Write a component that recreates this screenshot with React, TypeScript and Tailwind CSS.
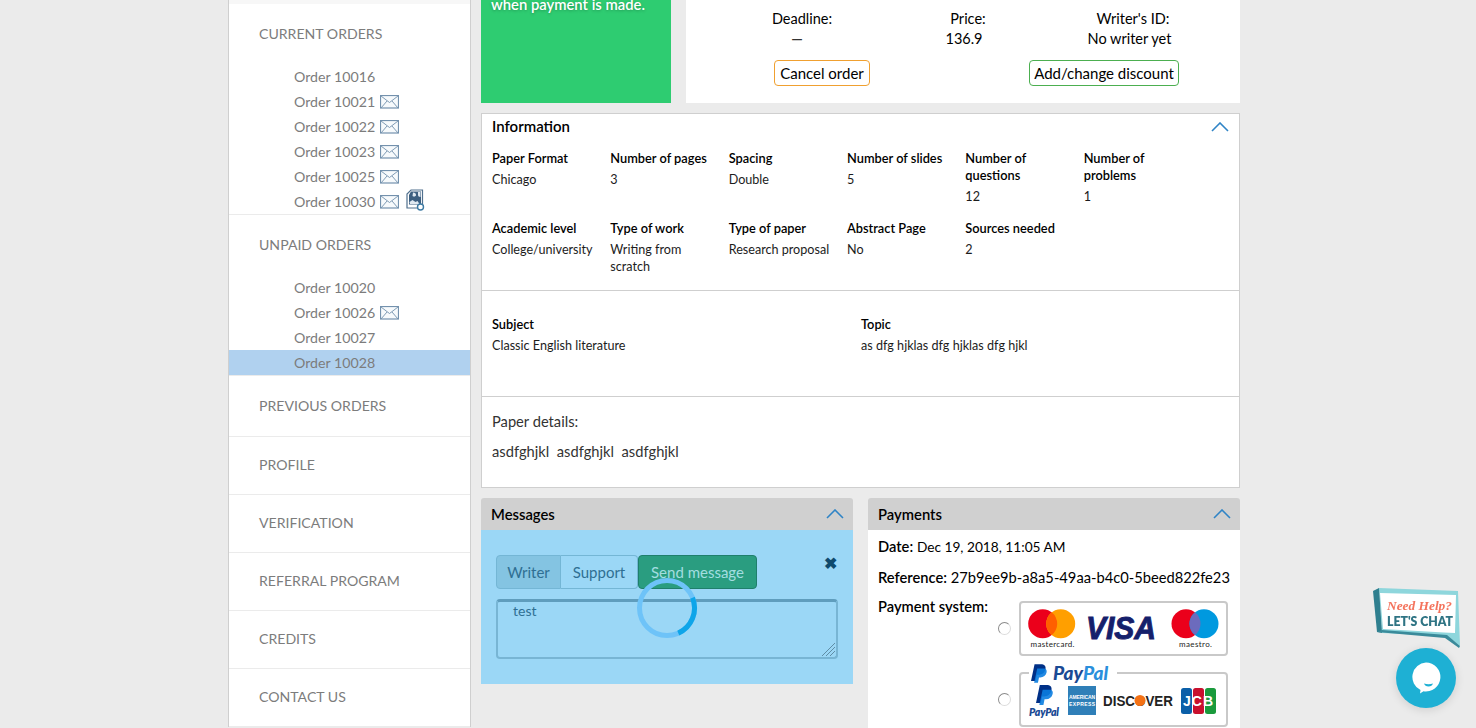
const currentOrders = [
  { id: 10016 },
  { id: 10021, mail: true },
  { id: 10022, mail: true },
  { id: 10023, mail: true },
  { id: 10025, mail: true },
  { id: 10030, mail: true, file: true },
]

const unpaidOrders = [
  { id: 10020 },
  { id: 10026, mail: true },
  { id: 10027 },
  { id: 10028, active: true },
]

const otherLinks = [
  { label: 'PREVIOUS ORDERS', cls: 'h-[61px]' },
  { label: 'PROFILE', cls: 'h-[58px]' },
  { label: 'VERIFICATION', cls: 'h-[58px]' },
  { label: 'REFERRAL PROGRAM', cls: 'h-[58px]' },
  { label: 'CREDITS', cls: 'h-[58px]' },
  { label: 'CONTACT US', cls: 'h-[58px]' },
]

const infoRowOne = [
  { label: 'Paper Format', value: 'Chicago' },
  { label: 'Number of pages', value: '3' },
  { label: 'Spacing', value: 'Double' },
  { label: 'Number of slides', value: '5' },
  { label: 'Number of questions', value: '12' },
  { label: 'Number of problems', value: '1' },
]

const infoRowTwo = [
  { label: 'Academic level', value: 'College/university' },
  { label: 'Type of work', value: 'Writing from scratch' },
  { label: 'Type of paper', value: 'Research proposal' },
  { label: 'Abstract Page', value: 'No' },
  { label: 'Sources needed', value: '2' },
]

function Chevron() {
  return (
    <svg width="18" height="10" viewBox="0 0 18 10" fill="none" stroke="#2f84c6" strokeWidth="1.6">
      <path d="M1 9l8-8 8 8" />
    </svg>
  )
}

function MailIcon() {
  return (
    <svg width="19" height="14" viewBox="0 0 19 14" fill="none" stroke="#7391ad" className="shrink-0">
      <rect x="0.5" y="0.5" width="18" height="12.5" fill="#f7fafc" strokeWidth="1.2" />
      <path d="M1 1l8.5 6.5L18 1M1 13l6-7M18 13l-6-7" strokeWidth="0.9" />
    </svg>
  )
}

function FileIcon() {
  return (
    <svg width="19" height="22" viewBox="0 0 19 22" fill="none" className="shrink-0">
      <path d="M5 1h11.5v18H1V5z" stroke="#50708e" strokeWidth="1.2" fill="#fff" />
      <path d="M5 2.5h10v13H3V6z" fill="#3d5f80" />
      <path d="M7 3.5c2 0 3 1 3 2.5s-2 2-3.5 1zM12 3h2.5v5c-1.5 0-2.5-1-2.5-2zM3.5 13l3-2 3 2 2-1 2 3H4z" fill="#dfe8f0" />
      <circle cx="14.5" cy="18" r="3" fill="#fff" stroke="#3d7aa3" strokeWidth="1.4" />
    </svg>
  )
}

function OrderRow({ order }: { order: { id: number; mail?: boolean; file?: boolean; active?: boolean } }) {
  return (
    <div className={`flex h-[25px] items-center gap-[5px] pl-[65px] text-[14.2px] text-[#7c7c7c] ${order.active ? 'bg-[#b0d1ef]' : ''}`}>
      <span>Order {order.id}</span>
      {order.mail && <MailIcon />}
      {order.file && <span className="-mt-[3px] ml-[2px]"><FileIcon /></span>}
    </div>
  )
}

function Sidebar() {
  return (
    <aside className="h-[727px] w-[243px] shrink-0 border-x border-b border-[#cfcfcf] bg-white text-[#7c7c7c] font-['Lato',sans-serif]">
      <div className="h-[4px] bg-[#f7f7f7]" />
      <div className="border-b border-[#ebebeb]">
        <div className="flex h-[60px] items-center pb-[1px] pl-[30px] text-[14.1px]">CURRENT ORDERS</div>
        <div className="h-[150px]">
          {currentOrders.map((o) => <OrderRow key={o.id} order={o} />)}
        </div>
      </div>
      <div className="border-b border-[#ebebeb]">
        <div className="flex h-[60px] items-center pb-[1px] pl-[30px] text-[14.1px]">UNPAID ORDERS</div>
        {unpaidOrders.map((o) => <OrderRow key={o.id} order={o} />)}
      </div>
      {otherLinks.map((l) => (
        <div key={l.label} className={`flex items-center border-b border-[#ebebeb] pb-[1px] pl-[30px] text-[14.1px] ${l.cls}`}>
          {l.label}
        </div>
      ))}
    </aside>
  )
}

function OrderSummary() {
  return (
    <div className="flex h-[103px] gap-[15px]">
      <div className="h-full w-[190px] shrink-0 overflow-hidden bg-[#2ecc71] px-[10px] text-[14.8px] font-semibold text-white [text-shadow:0_1px_3px_rgba(0,0,0,0.25)]">
        <p className="-mt-[6px] leading-[20px]">when payment is made.</p>
      </div>
      <div className="flex-1 bg-white text-[14.5px] leading-[20px] text-black">
        <div className="mt-[9px] grid grid-cols-[232px_96px_226px] text-center">
          <div>
            <div>Deadline:</div>
            <div className="pr-[10px] font-bold text-[#333]">&mdash;</div>
          </div>
          <div>
            <div className="pl-[4px]">Price:</div>
            <div className="pr-[4px]">136.9</div>
          </div>
          <div>
            <div className="whitespace-nowrap pl-[12px]">Writer's ID:</div>
            <div className="whitespace-nowrap pl-[5px]">No writer yet</div>
          </div>
        </div>
        <div className="mt-[11px] flex">
          <button className="ml-[88px] h-[26px] w-[96px] rounded-[4px] border border-[#f0a030] bg-white text-[15px]">Cancel order</button>
          <button className="ml-[159px] h-[26px] w-[150px] whitespace-nowrap rounded-[4px] border border-[#4caf50] bg-white text-[15px]">Add/change discount</button>
        </div>
      </div>
    </div>
  )
}

function InfoCell({ label, value }: { label: string; value: string }) {
  return (
    <div className="pr-[14px] text-[12.6px] leading-[17px]">
      <div className="text-[12.8px] font-semibold text-black">{label}</div>
      <div className="mt-[4px] text-[#1c1c1c]">{value}</div>
    </div>
  )
}

function Information() {
  return (
    <section className="mt-[10px] h-[375px] border border-[#cfcfcf] bg-white font-['Lato',sans-serif]">
      <div className="flex h-[26px] items-center justify-between px-[10px]">
        <span className="-mt-[1px] text-[15px] font-semibold text-black">Information</span>
        <Chevron />
      </div>
      <div className="h-[151px] border-b border-[#cfcfcf] px-[10px] pt-[10px]">
        <div className="grid h-[70px] w-[710px] grid-cols-6">
          {infoRowOne.map((c) => <InfoCell key={c.label} {...c} />)}
        </div>
        <div className="grid w-[710px] grid-cols-6">
          {infoRowTwo.map((c) => <InfoCell key={c.label} {...c} />)}
        </div>
      </div>
      <div className="grid h-[106px] grid-cols-[369px_1fr] border-b border-[#cfcfcf] px-[10px] pt-[25px]">
        <InfoCell label="Subject" value="Classic English literature" />
        <InfoCell label="Topic" value="as dfg hjklas dfg hjklas dfg hjkl" />
      </div>
      <div className="px-[10px] pt-[14px] text-[14.7px] leading-[20px] text-[#333]">
        <p>Paper details:</p>
        <p className="mt-[10px] whitespace-pre">asdfghjkl  asdfghjkl  asdfghjkl</p>
      </div>
    </section>
  )
}

function PanelHeader({ title }: { title: string }) {
  return (
    <div className="flex h-[32px] items-center justify-between rounded-t-[3px] bg-[#d0d0d0] pl-[10px] pr-[9px] text-[14.8px]">
      <span className="font-semibold text-black">{title}</span>
      <Chevron />
    </div>
  )
}

function Messages() {
  return (
    <section className="relative h-[186px] w-[372px] shrink-0 font-['Lato',sans-serif]">
      <PanelHeader title="Messages" />
      <div className="h-[154px] bg-[#9bd7f6] px-[15px] pt-[25px]">
        <div className="flex items-start justify-between">
          <div className="flex h-[34px] text-[15px] text-[#2f6f93]">
            <div className="flex w-[65px] items-center justify-center rounded-l-[4px] border border-[#74b6d5] bg-[#84c4e2]">Writer</div>
            <div className="flex w-[77px] items-center justify-center rounded-r-[4px] border border-l-0 border-[#74b6d5]">Support</div>
            <div className="flex w-[119px] items-center justify-center rounded-[4px] border border-[#1f7f6c] bg-[#2a9d80] text-[#a3dde0]">Send message</div>
          </div>
          <span className="mr-[1px] text-[16px] font-black leading-[16px] text-[#0f4a6d]">&#10006;</span>
        </div>
        <div className="relative mt-[10px] h-[60px] rounded-[4px] border-2 border-t-[3px] border-[#78b5d4] border-t-[#5f9dbd] pl-[15px] text-[14px] leading-[18px] text-[#2f6f93]">
          test
          <svg width="14" height="14" viewBox="0 0 14 14" stroke="#5f8da6" className="absolute bottom-[1px] right-[1px]">
            <path d="M1 14L14 1M5 14l9-9M9 14l5-5" strokeWidth="1" />
          </svg>
        </div>
      </div>
      {/* loading spinner lies over the form */}
      <svg width="62" height="62" viewBox="0 0 62 62" fill="none" className="absolute left-[155px] top-[79px]">
        <circle cx="31" cy="31" r="27.5" stroke="#6ec3f8" strokeWidth="5" />
        <path d="M56.5 20.7A27.5 27.5 0 0 1 42.3 56.1" stroke="#0ea5e9" strokeWidth="5" />
      </svg>
    </section>
  )
}

function CardsLogo() {
  return (
    <svg width="205" height="51" viewBox="0 0 205 51">
      <circle cx="21.7" cy="20.7" r="14.5" fill="#eb001b" />
      <circle cx="39.7" cy="20.7" r="14.5" fill="#ff9f00" />
      <path d="M30.7 9.33A14.5 14.5 0 0 1 30.7 32.07A14.5 14.5 0 0 1 30.7 9.33z" fill="#ff5f00" />
      <text x="9.5" y="44" fontSize="8" fill="#222" fontFamily="Lato, sans-serif" textLength="44">mastercard.</text>
      <text x="65" y="36" fontSize="31" fontWeight="700" fontStyle="italic" fill="#15206b" stroke="#15206b" strokeWidth="0.9" fontFamily="Liberation Sans, sans-serif" textLength="70" lengthAdjust="spacingAndGlyphs">VISA</text>
      <circle cx="165" cy="20.7" r="14.5" fill="#eb001b" />
      <circle cx="183" cy="20.7" r="14.5" fill="#0099df" />
      <path d="M174 9.33A14.5 14.5 0 0 1 174 32.07A14.5 14.5 0 0 1 174 9.33z" fill="#6c6bbd" />
      <text x="158" y="44" fontSize="8" fill="#222" fontFamily="Lato, sans-serif" textLength="33">maestro.</text>
    </svg>
  )
}

function PayPalMark({ x, y, s }: { x: number; y: number; s: number }) {
  return (
    <g transform={`translate(${x} ${y}) scale(${s})`}>
      <path d="M4 0h7c4 0 6 2 5.3 5.5C15.5 9.5 12.5 12 8.5 12H6.5L5 19H0z" fill="#003087" />
      <path d="M7 5h8c2.5.5 3 2.5 2.5 4.5C16.8 13 14 15 10.5 15H9l-1.2 6H3.5z" fill="#0a7de0" opacity="0.9" />
    </g>
  )
}

function WalletsLogo() {
  return (
    <svg width="205" height="51" viewBox="0 0 205 51">
      <PayPalMark x={15} y={11} s={0.95} />
      <text x="8" y="42" fontSize="10.5" fontWeight="800" fontStyle="italic" fill="#1a4a94" fontFamily="Lato, sans-serif" textLength="30">PayPal</text>
      <rect x="47" y="12" width="28" height="29" fill="#2f7fb8" />
      <text x="61" y="25" textAnchor="middle" fontSize="5" fontWeight="700" fill="#fff" fontFamily="Liberation Sans, sans-serif" textLength="26">AMERICAN</text>
      <text x="61" y="32" textAnchor="middle" fontSize="5" fontWeight="700" fill="#fff" fontFamily="Liberation Sans, sans-serif" textLength="26">EXPRESS</text>
      <text x="82" y="32" fontSize="14.5" fontWeight="700" fill="#222" fontFamily="Liberation Sans, sans-serif" textLength="70" lengthAdjust="spacingAndGlyphs">DISCOVER</text>
      <circle cx="119" cy="26.5" r="5.5" fill="#f47216" />
      <rect x="160" y="14" width="11" height="26" rx="2.5" fill="#0b5fa8" />
      <rect x="172" y="14" width="11" height="26" rx="2.5" fill="#c8102e" />
      <rect x="184" y="14" width="11" height="26" rx="2.5" fill="#1a9a3c" />
      <text x="177" y="32" textAnchor="middle" fontSize="14" fontWeight="700" fill="#fff" fontFamily="Liberation Sans, sans-serif" textLength="30">JCB</text>
    </svg>
  )
}

function Radio() {
  return <span className="h-[13px] w-[13px] shrink-0 rounded-full border border-[#8a8a8a] border-b-[#dcdcdc] border-r-[#dcdcdc] bg-white" />
}

function Payments() {
  return (
    <section className="h-[230px] flex-1 font-['Lato',sans-serif]">
      <PanelHeader title="Payments" />
      <div className="h-[198px] overflow-hidden bg-white pl-[10px] pr-[8px] pt-[6px] text-[14.7px] leading-[20px] text-black">
        <p><b className="font-semibold">Date:</b> <span className="text-[13.7px]">Dec 19, 2018, 11:05 AM</span></p>
        <p className="mt-[10px] whitespace-nowrap"><b className="font-semibold">Reference:</b> 27b9ee9b-a8a5-49aa-b4c0-5beed822fe23</p>
        <p className="mt-[9px] font-semibold">Payment system:</p>
        <div className="-mt-[15px] ml-[120px] flex items-center gap-[8px]">
          <Radio />
          <div className="h-[55px] w-[209px] rounded-[4px] border-2 border-[#c9c9c9]">
            <CardsLogo />
          </div>
        </div>
        <div className="ml-[120px] mt-[16px] flex items-center gap-[8px]">
          <Radio />
          <div className="relative h-[55px] w-[209px] rounded-[4px] border-2 border-[#c9c9c9]">
            <WalletsLogo />
            {/* legend sits on the card's top border */}
            <div className="absolute -top-[11px] left-[8px] flex w-[88px] items-center gap-[6px] bg-white pl-[2px] text-[19px] font-black italic leading-[20px] text-[#1a4a94]">
              <svg width="16" height="19" viewBox="0 0 18 21" className="shrink-0"><PayPalMark x={0} y={0} s={1} /></svg>
              <span>Pay<span className="text-[#2a8fdc]">Pal</span></span>
            </div>
          </div>
        </div>
      </div>
    </section>
  )
}

function ChatWidget() {
  return (
    <div className="fixed bottom-[20px] right-[20px] flex flex-col items-end">
      <svg width="90" height="62" viewBox="0 0 90 62" className="-mr-[6px]">
        <path d="M7 2L86 5L88 60L75 50L10 47z" fill="#8ed6dc" />
        <path d="M1 5L7 2L10 47L5 46z" fill="#2f7f8f" />
        <path d="M5 46L73 52L87 62L88 60L75 49L10 44z" fill="#3a8a9a" />
        <path d="M8 7L84 9L83 47L72 46.5L11 43z" fill="#fff" />
        <text x="15" y="24" fontSize="13.5" fontWeight="700" fontStyle="italic" fill="#f4735c" fontFamily="Liberation Serif, serif" textLength="65" lengthAdjust="spacingAndGlyphs">Need Help?</text>
        <text x="15" y="40" fontSize="13" fontWeight="800" fill="#2f7484" fontFamily="Lato, sans-serif" textLength="66" lengthAdjust="spacingAndGlyphs">LET'S CHAT</text>
      </svg>
      <div className="flex h-[60px] w-[60px] items-center justify-center rounded-full bg-[#1eb0d4] shadow-[0_2px_10px_rgba(0,0,0,0.12)]">
        <svg width="30" height="32" viewBox="0 0 30 32">
          <path d="M15 .5a14.5 14.5 0 1 1-2.5 28.8L9 31.5l.5-3.5A14.5 14.5 0 0 1 15 .5z" fill="#fff" />
          <path d="M13 21.5q4.5 1.5 9 0q-1 3-4.5 3t-4.5-3z" fill="#1eb0d4" />
        </svg>
      </div>
    </div>
  )
}

export default function App() {
  return (
    <div className="h-[728px] overflow-hidden bg-[#ebebeb] pl-[228px] font-['Lato',sans-serif]">
      <div className="flex gap-[10px]">
        <Sidebar />
        <main className="w-[759px] shrink-0">
          <OrderSummary />
          <Information />
          <div className="mt-[10px] flex gap-[15px]">
            <Messages />
            <Payments />
          </div>
        </main>
      </div>
      <ChatWidget />
    </div>
  )
}
